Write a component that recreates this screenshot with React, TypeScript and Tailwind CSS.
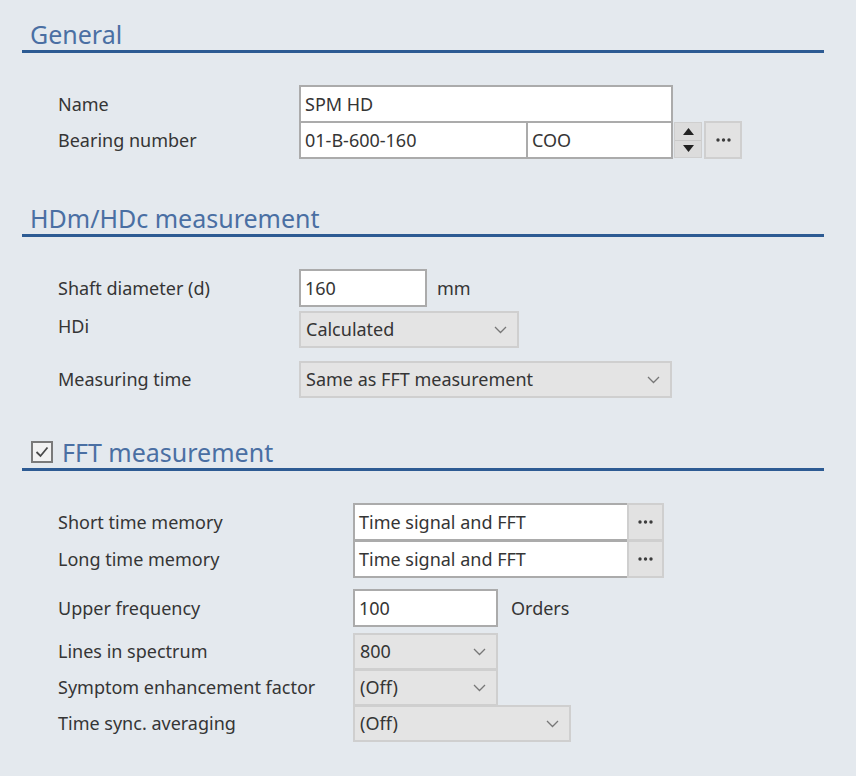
function Chevron() {
  return (
    <svg width="13" height="8" viewBox="0 0 13 8" className="shrink-0">
      <path d="M1 1 L6.5 6.5 L12 1" fill="none" stroke="#777" strokeWidth="1.3" />
    </svg>
  );
}

function Dots() {
  return (
    <svg width="15" height="4" viewBox="0 0 15 4">
      <circle cx="2" cy="2" r="1.7" fill="#3c3c3c" />
      <circle cx="7.5" cy="2" r="1.7" fill="#3c3c3c" />
      <circle cx="13" cy="2" r="1.7" fill="#3c3c3c" />
    </svg>
  );
}

function Heading({ title, checkbox }: { title: string; checkbox?: boolean }) {
  return (
    <div className="flex items-end h-[32px] border-b-[3px] border-[#2d5b93] pl-2 gap-[9px]">
      {checkbox && (
        <div className="w-[22px] h-[22px] mb-[5px] ml-px border-2 border-[#7a7a7a] bg-[#f2f2f2] flex items-center justify-center">
          <svg width="14" height="12" viewBox="0 0 14 12">
            <path d="M1.5 6 L5.5 10 L12.5 1.5" fill="none" stroke="#4a4a4a" strokeWidth="1.8" />
          </svg>
        </div>
      )}
      <span className="text-[25px] leading-[31px] text-[#4a6fa3]">{title}</span>
    </div>
  );
}

function TextBox({ value, w }: { value: string; w: string }) {
  return (
    <div className={`${w} h-[38px] bg-white border-2 border-[#ababab] flex items-center px-[4px]`}>
      {value}
    </div>
  );
}

function Select({ value, w }: { value: string; w: string }) {
  return (
    <div className={`${w} h-[37px] bg-[#e4e4e4] border-2 border-[#cfcfcf] flex items-center justify-between pl-[5px] pr-[10px]`}>
      <span>{value}</span>
      <Chevron />
    </div>
  );
}

function DotButton({ w }: { w: string }) {
  return (
    <div className={`${w} h-[38px] bg-[#e2e2e2] border-2 border-[#cfcfcf] flex items-center justify-center`}>
      <Dots />
    </div>
  );
}

function Label({ text, w }: { text: string; w: string }) {
  return <div className={`${w} shrink-0`}>{text}</div>;
}

export default function App() {
  return (
    <div
      className="w-[856px] h-[776px] bg-[#e4e9ee] text-[18px] text-[#353535] overflow-hidden"
      style={{ fontFamily: '"Noto Sans", "Liberation Sans", sans-serif' }}
    >
      <div className="w-[802px] ml-[22px] pt-[21px]">
        <Heading title="General" />

        <div className="pl-[36px] mt-[32px]">
          <div className="flex items-center">
            <Label text="Name" w="w-[241px]" />
            <TextBox value="SPM HD" w="w-[374px]" />
          </div>
          <div className="flex items-center -mt-[2px]">
            <Label text="Bearing number" w="w-[241px]" />
            <TextBox value="01-B-600-160" w="w-[229px]" />
            <div className="-ml-[2px]">
              <TextBox value="COO" w="w-[147px]" />
            </div>
            <div className="ml-[1px] w-[28px] h-[36px] bg-[#dcdcdc] border border-[#cfcfcf] flex flex-col">
              <div className="flex-1 flex items-center justify-center border-b border-[#c9c9c9]">
                <svg width="11" height="7" viewBox="0 0 11 7">
                  <path d="M0 7 L5.5 0 L11 7 Z" fill="#222" />
                </svg>
              </div>
              <div className="flex-1 flex items-center justify-center">
                <svg width="11" height="7" viewBox="0 0 11 7">
                  <path d="M0 0 L5.5 7 L11 0 Z" fill="#222" />
                </svg>
              </div>
            </div>
            <div className="ml-[2px]">
              <DotButton w="w-[38px]" />
            </div>
          </div>
        </div>

        <div className="mt-[46px]">
          <Heading title="HDm/HDc measurement" />
        </div>

        <div className="pl-[36px] mt-[32px]">
          <div className="flex items-center">
            <Label text="Shaft diameter (d)" w="w-[241px]" />
            <TextBox value="160" w="w-[128px]" />
            <span className="ml-[10px]">mm</span>
          </div>
          <div className="flex items-center mt-[4px]">
            <Label text="HDi" w="w-[241px] -mt-[6px]" />
            <Select value="Calculated" w="w-[220px]" />
          </div>
          <div className="flex items-center mt-[13px]">
            <Label text="Measuring time" w="w-[241px]" />
            <Select value="Same as FFT measurement" w="w-[373px]" />
          </div>
        </div>

        <div className="mt-[41px]">
          <Heading title="FFT measurement" checkbox />
        </div>

        <div className="pl-[36px] mt-[32px]">
          <div className="flex items-center">
            <Label text="Short time memory" w="w-[295px]" />
            <TextBox value="Time signal and FFT" w="w-[276px]" />
            <div className="-ml-[2px]">
              <DotButton w="w-[37px]" />
            </div>
          </div>
          <div className="flex items-center -mt-[1px]">
            <Label text="Long time memory" w="w-[295px]" />
            <TextBox value="Time signal and FFT" w="w-[276px]" />
            <div className="-ml-[2px]">
              <DotButton w="w-[37px]" />
            </div>
          </div>
          <div className="flex items-center mt-[11px]">
            <Label text="Upper frequency" w="w-[295px]" />
            <TextBox value="100" w="w-[145px]" />
            <span className="ml-[13px]">Orders</span>
          </div>
          <div className="flex items-center mt-[6px]">
            <Label text="Lines in spectrum" w="w-[295px]" />
            <Select value="800" w="w-[145px]" />
          </div>
          <div className="flex items-center -mt-[1px]">
            <Label text="Symptom enhancement factor" w="w-[295px]" />
            <Select value="(Off)" w="w-[145px]" />
          </div>
          <div className="flex items-center -mt-[1px]">
            <Label text="Time sync. averaging" w="w-[295px]" />
            <Select value="(Off)" w="w-[218px]" />
          </div>
        </div>
      </div>
    </div>
  );
}
